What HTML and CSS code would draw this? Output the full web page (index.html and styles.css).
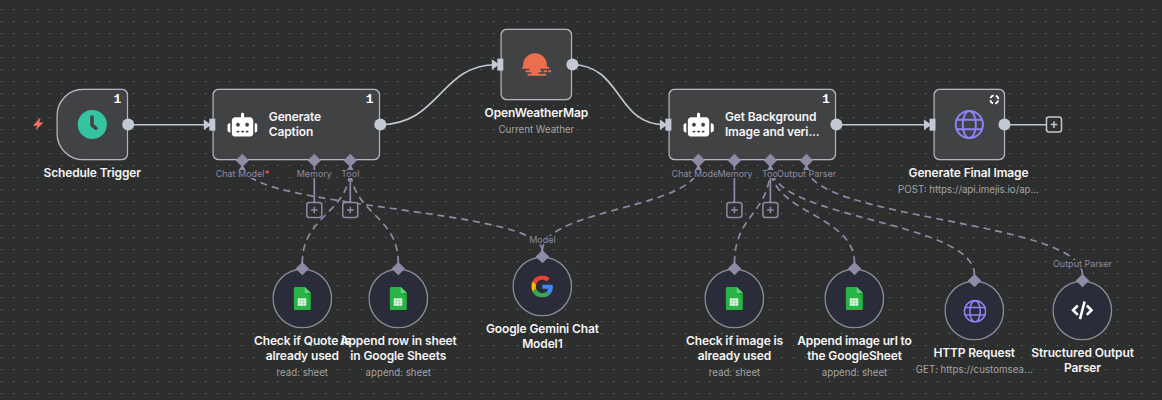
FILE: index.html
```html
<!DOCTYPE html>
<html lang="en">
<head>
<meta charset="utf-8">
<title>Workflow canvas</title>
<link rel="stylesheet" href="styles.css">
</head>
<body>
<main class="canvas">
  <svg class="layer grid" width="1162" height="400">
    <defs><pattern id="dots" width="12" height="12" patternUnits="userSpaceOnUse"><rect x="1" y="9" width="1" height="1" class="dot"/></pattern></defs>
    <rect width="1162" height="400" fill="url(#dots)"/>
  </svg>

  <svg class="layer edges" width="1162" height="400">
    <g class="main-edge">
      <path d="M128 124.700H206"/>
      <path d="M380 124.700C440 124.700 440 64.700 496 64.700"/>
      <path d="M572 64.700C622 64.700 616 124.700 664 124.700"/>
      <path d="M836 124.700H926"/>
      <path d="M1004 124.700H1046"/>
    </g>
    <g class="sub-edge dashed">
      <path d="M542.400 251C542.400 208.500 242.300 208.500 242.300 166"/>
      <path d="M302.300 263C302.300 214 350.300 214 350.300 166"/>
      <path d="M398.300 263C398.300 214 350.300 214 350.300 166"/>
      <path d="M542.400 251C542.400 208.500 698.400 208.500 698.400 166"/>
      <path d="M734.500 263C734.500 214 770.400 214 770.400 166"/>
      <path d="M854.500 263C854.500 214 770.400 214 770.400 166"/>
      <path d="M974.500 275C974.500 220 770.400 220 770.400 166"/>
      <path d="M1082.500 275C1082.500 220 806.400 220 806.400 166"/>
    </g>
    <g class="sub-edge">
      <path d="M314.300 161V202M350.300 161V202M734.400 161V202M770.400 161V202"/>
    </g>
  </svg>

  <section class="node trigger" style="left:56px;top:88px">
    <span class="badge">1</span>
    <svg width="30" height="30" viewBox="0 0 30 30"><circle cx="15" cy="15" r="14.600" fill="#35c4a1"/><path d="M14.700 7.500V15.700L18.700 18.800" fill="none" stroke="#414244" stroke-width="3.500" stroke-linecap="round" stroke-linejoin="round"/></svg>
  </section>
  <section class="node agent" style="left:212.300px;top:88px">
    <span class="badge">1</span>
    <svg class="robot" viewBox="0 0 640 512"><use href="#robot"/></svg>
    <h2 class="title">Generate<br>Caption</h2>
  </section>
  <section class="node" style="left:500.300px;top:28px">
    <svg width="30" height="26" viewBox="0 0 30 26" fill="#ec6e4c"><path d="M1.800 15.800V13.600a11.900 11.900 0 0 1 23.800 0V15.800z"/><path d="M.8 15.200H28V17.300H.8zM8 17H19V19H8zM4.200 18.700H20.500V20.700H4.200zM10 20H17V22.500H10zM22.200 18.700H26V20.700H22.200zM27 18.700H30V20.700H27zM6.200 22.300H24.800V24.300H6.200z"/></svg>
  </section>
  <section class="node agent" style="left:668.400px;top:88px">
    <span class="badge">1</span>
    <svg class="robot" viewBox="0 0 640 512"><use href="#robot"/></svg>
    <h2 class="title">Get Background<br>Image and veri...</h2>
  </section>
  <section class="node" style="left:932.500px;top:88px">
    <svg class="status" width="12" height="12" viewBox="0 0 12 12"><circle cx="6" cy="6" r="4.100"/></svg>
    <svg class="globe" width="30" height="30" viewBox="0 0 30 30"><use href="#globe"/></svg>
  </section>

  <section class="node round" style="left:272.300px;top:268.400px"><svg width="18" height="24" viewBox="0 0 18 24"><use href="#sheet"/></svg></section>
  <section class="node round" style="left:368.300px;top:268.400px"><svg width="18" height="24" viewBox="0 0 18 24"><use href="#sheet"/></svg></section>
  <section class="node round" style="left:512.400px;top:256.400px">
    <svg width="22" height="22" viewBox="0 0 48 48"><path fill="#EA4335" d="M24 9.500c3.540 0 6.710 1.220 9.210 3.600l6.850-6.850C35.900 2.380 30.470 0 24 0 14.620 0 6.510 5.380 2.560 13.220l7.980 6.190C12.430 13.720 17.740 9.500 24 9.500z"/><path fill="#4285F4" d="M46.980 24.550c0-1.570-.15-3.090-.38-4.550H24v9.020h12.940c-.58 2.960-2.260 5.480-4.780 7.180l7.730 6c4.510-4.180 7.090-10.360 7.090-17.650z"/><path fill="#FBBC05" d="M10.530 28.590c-.48-1.450-.76-2.990-.76-4.590s.27-3.140.76-4.590l-7.980-6.190C.92 16.460 0 20.120 0 24c0 3.880.92 7.540 2.560 10.780l7.970-6.190z"/><path fill="#34A853" d="M24 48c6.480 0 11.930-2.130 15.890-5.810l-7.730-6c-2.150 1.450-4.920 2.300-8.160 2.300-6.260 0-11.570-4.220-13.470-9.910l-7.980 6.190C6.510 42.620 14.620 48 24 48z"/></svg>
  </section>
  <section class="node round" style="left:704.400px;top:268.400px"><svg width="18" height="24" viewBox="0 0 18 24"><use href="#sheet"/></svg></section>
  <section class="node round" style="left:824.400px;top:268.400px"><svg width="18" height="24" viewBox="0 0 18 24"><use href="#sheet"/></svg></section>
  <section class="node round" style="left:944.400px;top:280.400px"><svg class="globe" width="23.500" height="23.500" viewBox="0 0 30 30"><use href="#globe"/></svg></section>
  <section class="node round" style="left:1052.400px;top:280.400px">
    <svg width="24" height="20" viewBox="0 0 24 20" fill="none" stroke="#fff" stroke-width="2.600"><path d="M7.500 5L2.800 9.700l4.700 4.700M16.500 5L21.200 9.700l-4.700 4.700M14.300 1L9.700 18.700"/></svg>
  </section>

  <svg class="layer handles" width="1162" height="400">
    <defs>
      <g id="input"><path d="M-8.500 -5.300L-1 0L-8.500 5.300z"/><rect x="-3" y="-6" width="6" height="12"/></g>
      <path id="diamond" d="M0 -6.700L6.700 0L0 6.700L-6.700 0z"/>
      <g id="diamond-arrow"><path d="M0 -6.700L6.700 0L0 6.700L-6.700 0z"/><path d="M0 4L4 10.500H-4z"/></g>
      <g id="plus"><rect x="-7.500" y="-7.500" width="15" height="15" rx="2.500"/><path d="M-3.300 0H3.300M0 -3.300V3.300"/></g>
      <path id="robot" d="M320 0c17.700 0 32 14.300 32 32V96H472c39.800 0 72 32.200 72 72V440c0 39.800-32.200 72-72 72H168c-39.800 0-72-32.200-72-72V168c0-39.800 32.200-72 72-72H288V32c0-17.700 14.300-32 32-32zM208 384c-8.800 0-16 7.200-16 16s7.200 16 16 16h32c8.800 0 16-7.200 16-16s-7.200-16-16-16zm96 0c-8.800 0-16 7.200-16 16s7.200 16 16 16h32c8.800 0 16-7.200 16-16s-7.200-16-16-16zm96 0c-8.800 0-16 7.200-16 16s7.200 16 16 16h32c8.800 0 16-7.200 16-16s-7.200-16-16-16zM264 256a40 40 0 1 0-80 0a40 40 0 1 0 80 0zm152 40a40 40 0 1 0 0-80a40 40 0 1 0 0 80zM48 224H64V416H48c-26.500 0-48-21.500-48-48V272c0-26.500 21.500-48 48-48zm544 0c26.500 0 48 21.500 48 48v96c0 26.500-21.500 48-48 48H576V224z"/>
      <g id="globe"><circle cx="15" cy="15" r="13.600"/><ellipse cx="15" cy="15" rx="6.600" ry="13.600"/><path d="M2.300 10.200H27.700M2.300 19.800H27.700"/></g>
      <g id="sheet"><path fill="#28b446" d="M2 .5H11.500L17.500 6.500V22.500a1 1 0 0 1-1 1H1.500a1 1 0 0 1-1-1V2A1.500 1.500 0 0 1 2 .5z"/><path fill="#6ace7c" d="M11.500.5L17.500 6.500H12.500a1 1 0 0 1-1-1z"/><path fill="#219b38" d="M13 6.500h4.500V11z"/><rect x="4.500" y="11.700" width="8.500" height="7.500" rx=".8" fill="#e5f6e8"/><path d="M4.500 14.200h8.500M4.500 16.700h8.500M7.300 12v7M10.200 12v7" stroke="#80d18d" stroke-width=".6"/></g>
    </defs>
    <g class="main-fill">
      <use href="#input" x="212.300" y="124.700"/><use href="#input" x="500.300" y="64.600"/><use href="#input" x="668.400" y="124.700"/><use href="#input" x="932.500" y="124.700"/>
      <circle cx="128.200" cy="124.600" r="6"/><circle cx="380.300" cy="124.600" r="6"/><circle cx="572.400" cy="64.600" r="6"/><circle cx="836.400" cy="124.600" r="6"/><circle cx="1004.500" cy="124.600" r="6"/>
    </g>
    <g class="sub-fill">
      <use href="#diamond-arrow" x="242.300" y="160.400"/><use href="#diamond" x="314.300" y="160.400"/><use href="#diamond-arrow" x="350.300" y="160.400"/>
      <use href="#diamond-arrow" x="698.400" y="160.400"/><use href="#diamond" x="734.400" y="160.400"/><use href="#diamond-arrow" x="770.400" y="160.400"/><use href="#diamond-arrow" x="806.400" y="160.400"/>
      <use href="#diamond" x="302.300" y="268.600"/><use href="#diamond" x="398.300" y="268.600"/><use href="#diamond" x="542.400" y="256.600"/><use href="#diamond" x="734.500" y="268.600"/><use href="#diamond" x="854.500" y="268.600"/><use href="#diamond" x="974.500" y="280.600"/><use href="#diamond" x="1082.500" y="280.600"/>
    </g>
    <g class="plus"><use href="#plus" x="314.300" y="210"/><use href="#plus" x="350.300" y="210"/><use href="#plus" x="734.400" y="210"/><use href="#plus" x="770.400" y="210"/></g>
    <g class="plus bright"><use href="#plus" x="1054" y="124.600"/></g>
    <path fill="#f0705c" d="M39.500 118.300L33 125.700H37.200L35.600 130.300L43.500 122.600H39.200L40.600 118.300z"/>
  </svg>

  <span class="port" style="left:242.600px;top:174px">Chat Model<b class="required">*</b></span>
  <span class="port" style="left:314.300px;top:174px">Memory</span>
  <span class="port" style="left:350.300px;top:174px">Tool</span>
  <span class="port" style="left:696px;top:174px">Chat Model</span>
  <span class="port" style="left:735px;top:174px">Memory</span>
  <span class="port" style="left:771px;top:174px">Tool</span>
  <span class="port" style="left:806.600px;top:174px">Output Parser</span>
  <span class="port" style="left:542.400px;top:240px">Model</span>
  <span class="port" style="left:1082.500px;top:264px">Output Parser</span>

  <div class="caption" style="left:92.200px;top:165px"><h2 class="title">Schedule Trigger</h2></div>
  <div class="caption" style="left:536.400px;top:105px"><h2 class="title">OpenWeatherMap</h2><p class="subtitle">Current Weather</p></div>
  <div class="caption" style="left:968.500px;top:165px"><h2 class="title">Generate Final Image</h2><p class="subtitle">POST: https://api.imejis.io/ap...</p></div>
  <div class="caption" style="left:302.300px;top:333px"><h2 class="title">Check if Quote is<br>already used</h2><p class="subtitle">read: sheet</p></div>
  <div class="caption" style="left:398.300px;top:333px"><h2 class="title">Append row in sheet<br>in Google Sheets</h2><p class="subtitle">append: sheet</p></div>
  <div class="caption" style="left:542.400px;top:321px"><h2 class="title">Google Gemini Chat<br>Model1</h2></div>
  <div class="caption" style="left:734.500px;top:333px"><h2 class="title">Check if image is<br>already used</h2><p class="subtitle">read: sheet</p></div>
  <div class="caption" style="left:854.500px;top:333px"><h2 class="title">Append image url to<br>the GoogleSheet</h2><p class="subtitle">append: sheet</p></div>
  <div class="caption" style="left:974.200px;top:345px"><h2 class="title">HTTP Request</h2><p class="subtitle wide">GET: https://customsea...</p></div>
  <div class="caption" style="left:1082.500px;top:345px"><h2 class="title">Structured Output<br>Parser</h2></div>
</main>
</body>
</html>
```
FILE: styles.css
```css
body { margin: 0; background: #2d2e2e; font-family: Inter, "Open Sans", sans-serif; }
.canvas { position: relative; width: 1162px; height: 400px; overflow: hidden; background: #2d2e2e; }
.layer { position: absolute; left: 0; top: 0; }
.dot { fill: #7c7d7d; }

.main-edge path { fill: none; stroke: #c3c5d2; stroke-width: 1.6; }
.sub-edge path { fill: none; stroke: #8d8ba6; stroke-width: 1.7; }
.dashed path { stroke-dasharray: 7 5; }
.main-fill { fill: #c3c8d5; }
.sub-fill { fill: #8d8ba6; }
.plus { fill: #2d2e2e; stroke: #8d8ba6; stroke-width: 1.5; }
.plus path { stroke: #c5c6cc; stroke-width: 1.1; }
.plus.bright { stroke: #c3c5d2; }

.node { position: absolute; box-sizing: border-box; width: 72px; height: 72px; display: flex; align-items: center; justify-content: center; background: #414244; box-shadow: inset 0 0 0 1.400px #b3b4bf; border-radius: 6.500px; transform: translate(.3px, .5px); }
.trigger { border-radius: 27px 6.500px 6.500px 27px; }
.agent { width: 168px; justify-content: flex-start; gap: 11px; padding-left: 14.700px; }
.agent .title { text-align: left; transform: translateY(-.5px); }
.robot { width: 30.500px; height: 24.500px; fill: #fff; }
.round { width: 60px; height: 60px; border-radius: 50%; background: #2b2c3a; box-shadow: inset 0 0 0 1.400px #8c8c92; }
.globe { fill: none; stroke: #8e82f5; stroke-width: 2; }
.status { position: absolute; right: 5px; top: 5px; fill: none; stroke: #fff; stroke-width: 1.8; stroke-dasharray: 4.300 2.140; stroke-dashoffset: -1.100; }
.badge { position: absolute; right: 7px; top: 4px; font: bold 13px/14px "Liberation Mono", monospace; color: #fff; }

.title { margin: 0; font-size: 12px; font-weight: 600; line-height: 15px; letter-spacing: -.13px; color: #f4f4f5; white-space: nowrap; text-align: center; }
.caption { position: absolute; display: flex; flex-direction: column; align-items: center; gap: 2px; transform: translateX(-50%); }
.subtitle { margin: 0; font-size: 9.700px; line-height: 15px; color: #a3a4a9; white-space: nowrap; }
.wide { letter-spacing: .05px; }
.port { position: absolute; transform: translate(-50%, -50%); background: #2d2e2e; font-size: 9px; line-height: 8px; color: #8d8ba6; white-space: nowrap; }
.required { color: #f04a4a; }
```
